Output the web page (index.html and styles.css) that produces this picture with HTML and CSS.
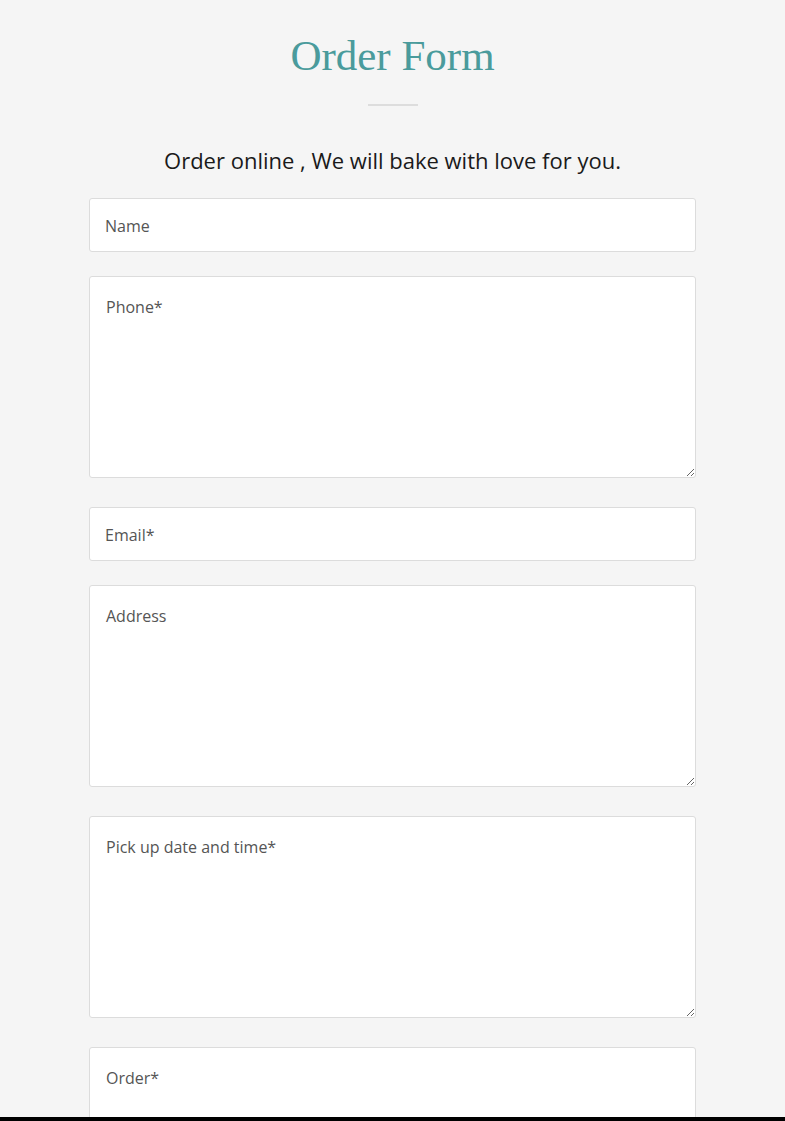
FILE: index.html
```html
<!DOCTYPE html>
<html>
<head>
<meta charset="utf-8">
<link rel="stylesheet" href="styles.css">
</head>
<body>
<div class="page">
  <h1 class="title">Order Form</h1>
  <div class="divider"></div>
  <p class="lead">Order online , We will bake with love for you.</p>
  <form class="form">
    <input class="field" type="text" placeholder="Name">
    <textarea class="area" placeholder="Phone*"></textarea>
    <input class="field" type="email" placeholder="Email*">
    <textarea class="area" placeholder="Address"></textarea>
    <textarea class="area" placeholder="Pick up date and time*"></textarea>
    <textarea class="area" placeholder="Order*"></textarea>
  </form>
</div>
<div class="bottom-bar"></div>
</body>
</html>
```
FILE: styles.css
```css
html, body {
  margin: 0;
  padding: 0;
  background: #f5f5f5;
}
body {
  font-family: "Open Sans", "Noto Sans", sans-serif;
  color: #222;
}
.page {
  width: 607px;
  margin: 0 auto;
  padding-top: 30px;
}
.title {
  margin: 0;
  text-align: center;
  font-family: "Liberation Serif", "DejaVu Serif", serif;
  font-weight: 400;
  font-size: 43px;
  line-height: 52px;
  color: #4a9b9c;
}
.divider {
  width: 50px;
  height: 2px;
  background: #dddddd;
  margin: 22px auto 0;
}
.lead {
  margin: 39px 0 0;
  text-align: center;
  font-size: 22px;
  line-height: 30px;
  color: #1a1a1a;
}
.form {
  margin-top: 23px;
}
.field, .area {
  display: block;
  box-sizing: border-box;
  width: 607px;
  background: #fff;
  border: 1px solid #dcdcdc;
  border-radius: 3px;
  font-family: "Open Sans", "Noto Sans", sans-serif;
  font-size: 16px;
  color: #555;
  outline: none;
}
.field {
  height: 54px;
  padding: 2px 15px 0;
  margin-bottom: 24px;
}
.area {
  height: 202px;
  padding: 18px 16px;
  margin-bottom: 29px;
  line-height: 24px;
  resize: vertical;
}
.field::placeholder, .area::placeholder {
  color: #555;
  opacity: 1;
}
.bottom-bar {
  position: fixed;
  left: 0;
  right: 0;
  bottom: 0;
  height: 4px;
  background: #000;
}
```
